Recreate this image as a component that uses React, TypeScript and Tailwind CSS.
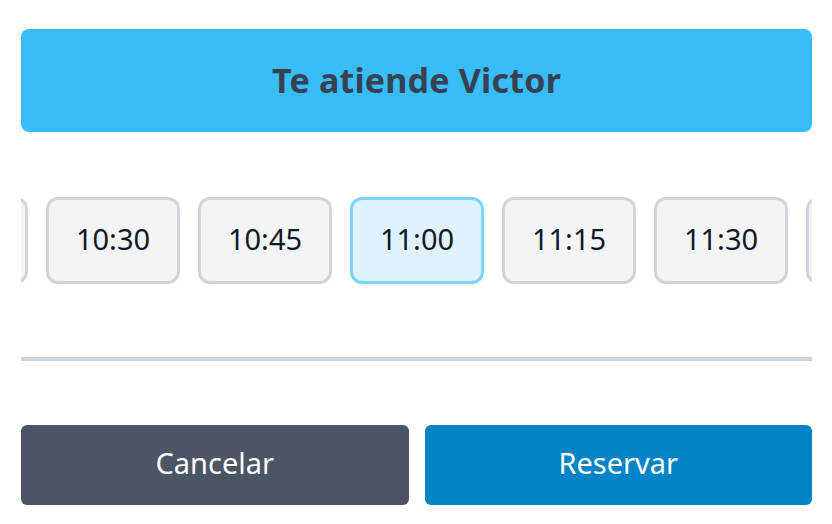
const SLOTS = ['10:15', '10:30', '10:45', '11:00', '11:15', '11:30', '11:45']
const SELECTED = '11:00'

export default function App() {
  return (
    <div className="w-[832px] h-[524px] bg-white pl-[21px] pr-[20px] pt-[29px] font-['Noto_Sans',sans-serif]">
      {/* header */}
      <div className="h-[103px] rounded-lg bg-[#38bdf8] flex items-center justify-center">
        <h2 className="text-[34px] font-bold text-[#374151] tracking-[0.2px]">Te atiende Victor</h2>
      </div>

      {/* time slots, scrolled strip */}
      <div className="mt-[65px] overflow-hidden">
        <div className="flex gap-[18px] ml-[-127px]">
          {SLOTS.map(t => (
            <div
              key={t}
              className={
                t === SELECTED
                  ? 'shrink-0 w-[134px] h-[87px] pb-1 rounded-xl border-[3px] border-[#7dd3fc] bg-[#e0f2fe] flex items-center justify-center text-[29px] text-[#111827]'
                  : 'shrink-0 w-[134px] h-[87px] pb-1 rounded-xl border-[3px] border-[#d1d5db] bg-[#f3f4f6] flex items-center justify-center text-[29px] text-[#111827]'
              }
            >
              {t}
            </div>
          ))}
        </div>
      </div>

      <div className="mt-[73px] h-[4px] bg-[#cbd5e1]" />

      {/* actions */}
      <div className="mt-[64px] flex gap-4">
        <button className="flex-1 h-[80px] pb-1 rounded-md bg-[#4b5563] text-white text-[29px]">Cancelar</button>
        <button className="flex-1 h-[80px] pb-1 rounded-md bg-[#0284c7] text-white text-[29px]">Reservar</button>
      </div>
    </div>
  )
}
